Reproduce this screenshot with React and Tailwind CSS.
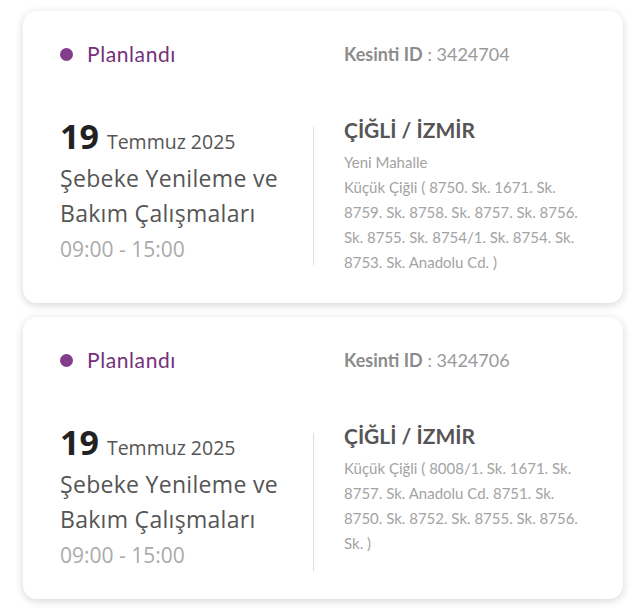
import React from 'react';

const outages = [
  {
    id: '3424704',
    day: '19',
    monthYear: 'Temmuz 2025',
    title: 'Şebeke Yenileme ve Bakım Çalışmaları',
    hours: '09:00 - 15:00',
    location: 'ÇİĞLİ / İZMİR',
    lines: [
      'Yeni Mahalle',
      'Küçük Çiğli ( 8750. Sk. 1671. Sk. 8759. Sk. 8758. Sk. 8757. Sk. 8756. Sk. 8755. Sk. 8754/1. Sk. 8754. Sk. 8753. Sk. Anadolu Cd. )',
    ],
  },
  {
    id: '3424706',
    day: '19',
    monthYear: 'Temmuz 2025',
    title: 'Şebeke Yenileme ve Bakım Çalışmaları',
    hours: '09:00 - 15:00',
    location: 'ÇİĞLİ / İZMİR',
    lines: [
      'Küçük Çiğli ( 8008/1. Sk. 1671. Sk. 8757. Sk. Anadolu Cd. 8751. Sk. 8750. Sk. 8752. Sk. 8755. Sk. 8756. Sk. )',
    ],
  },
];

const leftFont = { fontFamily: '"Open Sans", "Noto Sans", sans-serif' };

const OutageCard = ({ item }) => (
  <div className="w-[600px] bg-white rounded-[14px] shadow-[0_2px_9px_rgba(0,0,0,0.16)] pl-[37px] pr-[34px] pt-[29px] pb-[28px]">
    {/* header */}
    <div className="flex items-center h-[28px] font-['Lato',sans-serif]">
      <div className="w-[284px] flex items-center">
        <span className="w-[13px] h-[13px] rounded-full bg-[#833d8a]" />
        <span className="ml-[14px] text-[21px] tracking-[0.6px] text-[#74307a]">Planlandı</span>
      </div>
      <div className="text-[18px] text-[#9a9a9a]">
        <span className="font-bold text-[#8c8c8c]">Kesinti ID</span> : {item.id}
      </div>
    </div>

    {/* body */}
    <div className="flex items-start mt-[48px]">
      <div className="w-[253px] min-h-[148px] shrink-0" style={leftFont}>
        <div className="leading-[40px]">
          <span className="text-[34px] font-bold text-[#222]">{item.day}</span>
          <span className="ml-[8px] text-[19.5px] text-[#555]">{item.monthYear}</span>
        </div>
        <div className="-mt-[2px] text-[23px] leading-[35px] tracking-[0.3px] text-[#555] pr-[10px]">
          {item.title}
        </div>
        <div className="mt-[4px] text-[21px] leading-[28px] text-[#aaa]">{item.hours}</div>
      </div>

      <div className="w-px h-[138px] mt-[11px] bg-[#dedede] shrink-0" />

      <div className="flex-1 pl-[30px] font-['Lato',sans-serif]">
        <div className="text-[21px] leading-[28px] font-bold text-[#555]">{item.location}</div>
        <div className="mt-[6px] text-[15px] leading-[25px] text-[#a3a3a3]">
          {item.lines.map((l, i) => (
            <div key={i}>{l}</div>
          ))}
        </div>
      </div>
    </div>
  </div>
);

const App = () => {
  return (
    <div className="min-h-screen bg-white pl-[23px] pt-[11px] flex flex-col gap-[14px]">
      {outages.map((o) => (
        <OutageCard key={o.id} item={o} />
      ))}
    </div>
  );
};

export default App;
